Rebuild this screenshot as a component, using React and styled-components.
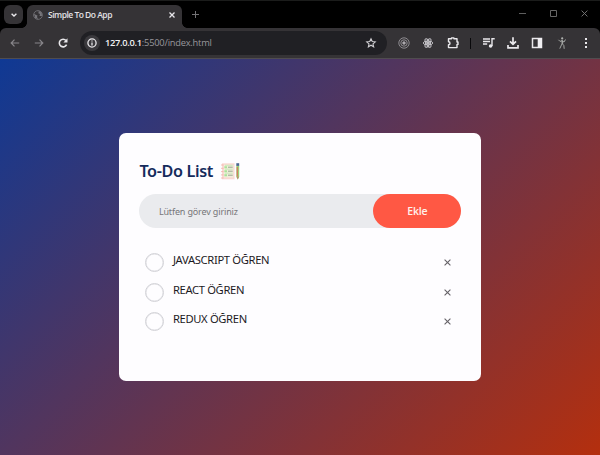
import React from "react";
import styled, { createGlobalStyle } from "styled-components";

const GlobalStyle = createGlobalStyle`
  * { box-sizing: border-box; }
  body { margin: 0; background: #000; font-family: "Open Sans", "Noto Sans", sans-serif; }
  button, input { font: inherit; border: 0; padding: 0; margin: 0; background: none; }
  svg { display: block; flex: none; overflow: visible; }
`;

const Window = styled.div`
  width: 600px;
  height: 455px;
  display: flex;
  flex-direction: column;
  overflow: hidden;
  background: #000;
`;

const TabStrip = styled.header`
  height: 28px;
  flex: none;
  display: flex;
  align-items: flex-start;
  border-top: 1px solid #1b1c1b;
  padding: 4px 8px 0 4px;
`;

const TabSearch = styled.button`
  width: 19px;
  height: 19px;
  border-radius: 6px;
  background: #353336;
  display: grid;
  place-items: center;
`;

const Tab = styled.div`
  position: relative;
  width: 155px;
  height: 23px;
  margin-left: 4px;
  padding: 0 7px 3px 6px;
  border-radius: 6px 6px 0 0;
  background: #353336;
  display: flex;
  align-items: center;
  &::before, &::after {
    content: "";
    position: absolute;
    bottom: 0;
    width: 5px;
    height: 5px;
  }
  &::before { left: -5px; background: radial-gradient(circle at 0 0, transparent 4.5px, #353336 5px); }
  &::after { right: -5px; background: radial-gradient(circle at 100% 0, transparent 4.5px, #353336 5px); }
`;

const TabTitle = styled.span`
  flex: 1;
  margin-left: 5px;
  color: #e2e1e4;
  font: 600 8.5px/12px "Open Sans", sans-serif;
  letter-spacing: -0.5px;
  white-space: nowrap;
`;

const NewTab = styled.button`
  width: 8px;
  height: 19px;
  margin-left: 9px;
  display: grid;
  place-items: center;
`;

const WindowControls = styled.div`
  margin-left: auto;
  height: 17px;
  display: flex;
  align-items: center;
  gap: 24px;
  padding-right: 4px;
`;

const Toolbar = styled.nav`
  height: 31px;
  flex: none;
  display: flex;
  align-items: center;
  background: #353336;
  border-bottom: 1px solid #504d4f;
  border-radius: 6px 6px 0 0;
  padding: 0 9px 0 9px;
`;

const NavButtons = styled.div`
  display: flex;
  align-items: center;
  gap: 12px;
  width: 71px;
  flex: none;
`;

const AddressBar = styled.div`
  width: 307px;
  flex: none;
  height: 24px;
  padding: 0 11px 0 4px;
  border-radius: 12px;
  background: #202024;
  display: flex;
  align-items: center;
`;

const SiteInfo = styled.span`
  width: 16px;
  height: 16px;
  border-radius: 50%;
  background: #3a393d;
  display: grid;
  place-items: center;
`;

const Url = styled.span`
  flex: 1;
  margin-left: 5px;
  color: #98979c;
  font: 400 9.3px/14px "Open Sans", sans-serif;
  letter-spacing: -0.22px;
  b { color: #f2f2f3; font-weight: 600; letter-spacing: -0.3px; }
`;

const Extensions = styled.div`
  margin-left: 11px;
  display: flex;
  align-items: center;
  gap: 12.3px;
`;

const Divider = styled.span`
  width: 1.5px;
  flex: none;
  height: 11px;
  margin: 0 -1px;
  background: #09090b;
`;

const Page = styled.main`
  flex: 1;
  padding-top: 74px;
  background: linear-gradient(135deg, #0f3994, #b42f0e);
`;

const Card = styled.section`
  width: 362px;
  height: 248px;
  margin: 0 auto 0 119.4px;
  padding: 26px 20px;
  border-radius: 7px;
  background: #fefdff;
`;

const Heading = styled.h2`
  height: 24px;
  margin: 0;
  display: flex;
  align-items: center;
  gap: 8px;
  color: #152b5c;
  font: 600 16.2px/24px "Noto Sans", sans-serif;
  span { width: 74px; white-space: nowrap; letter-spacing: -0.36px; }
`;

const AddForm = styled.form`
  height: 34px;
  margin-top: 11px;
  display: flex;
  border-radius: 17px;
  background: #eaebee;
`;

const TaskInput = styled.input`
  flex: 1;
  min-width: 0;
  padding-left: 19.5px;
  padding-top: 1px;
  outline: 0;
  font: 400 9px/14px "Noto Sans", sans-serif;
  letter-spacing: -0.15px;
  &::placeholder { color: #767679; opacity: 1; }
`;

const AddButton = styled.button`
  width: 88px;
  border-radius: 17px;
  background: #ff5844;
  color: #fff2ed;
  font: 600 10.5px/34px "Open Sans", sans-serif;
  letter-spacing: -0.15px;
`;

const TaskList = styled.ul`
  list-style: none;
  margin: 19.7px 0 0;
  padding: 0 10.3px 0 5.5px;
`;

const Task = styled.li`
  height: 29.6px;
  display: flex;
  align-items: center;
`;

const Check = styled.span`
  width: 19px;
  height: 19px;
  border: 1px solid #d2d2d7;
  box-shadow: inset 0 0 0 0.5px #dedee2;
  border-radius: 50%;
`;

const TaskName = styled.span`
  flex: 1;
  margin: -4.6px 0 0 9px;
  color: #1c1a1e;
  font: 400 11.2px/16px "Noto Sans", sans-serif;
  letter-spacing: -0.33px;
`;

const Icon = ({ w = 12, h = w, box = "0 0 12 12", color = "#e9e8eb", sw = 1.3, children }) => (
  <svg width={w} height={h} viewBox={box} fill="none" stroke={color} strokeWidth={sw}>
    {children}
  </svg>
);

const Cross = ({ size, color, sw }) => (
  <Icon w={size} box="0 0 6 6" color={color} sw={sw}>
    <path d="M.5 .5 5.5 5.5M5.5 .5 .5 5.5" />
  </Icon>
);

const Globe = () => (
  <Icon w={10} box="0 0 10 10" color="#69686d" sw={1}>
    <circle cx="5" cy="5" r="4.4" />
    <path d="M1 3.5 3 5 4.5 5.5 4 7 5 9 2.2 8Z M4 1 6.5 1.5 5 3 7 4 6.5 6 9 6 8.7 3 6.5 1Z" fill="#77767b" stroke="none" />
  </Icon>
);

const Notepad = () => (
  <svg width="19" height="17" viewBox="0 0 19 17">
    <path d="M1 .3H13.5V16.3H1Z" fill="#f9d8d2" />
    <path d="M3 1.8H12.4V14.4H3Z" fill="#f1eed9" />
    <path d="M0 2H2.5M0 5.3H2.5M0 8.6H2.5M0 11.9H2.5M0 15H2.5" stroke="#f3afa7" strokeWidth=".8" />
    <path d="M3.4 4.2H6M3.4 8.2H6M3.4 12.2H6" stroke="#a9e39a" strokeWidth="2" />
    <path d="M7 4.2H11.7M7 8.2H11.7M7 12.2H11.7" stroke="#8f9b8a" strokeWidth=".9" />
    <path d="M4 2.3H11.7M4 6.2H11.7M4 10.2H11.7" stroke="#c0e9b3" strokeWidth=".8" />
    <path d="M15.3 2.7H18.2V13.8L16.8 16.5 15.3 13.8Z" fill="#9bd077" />
    <path d="M16.3 4V13.4" stroke="#dd705c" strokeWidth="1.1" />
    <path d="M15.3 .2H18.2V2.9H15.3Z" fill="#4b6690" />
    <path d="M15.6 13.8H18L16.8 16.5Z" fill="#b98c6e" />
  </svg>
);

const tasks = ["JAVASCRIPT ÖĞREN", "REACT ÖĞREN", "REDUX ÖĞREN"];

const BrowserTabs = () => (
  <TabStrip>
    <TabSearch aria-label="Search tabs">
      <Icon w={6} h={4} box="0 0 6 4" sw={1.4}><path d="M.6 .7 3 3 5.4 .7" /></Icon>
    </TabSearch>
    <Tab>
      <Globe />
      <TabTitle>Simple To Do App</TabTitle>
      <Cross size={6} color="#e8e7eb" sw={1.3} />
    </Tab>
    <NewTab aria-label="New tab">
      <Icon w={7} box="0 0 7 7" color="#737275" sw={1}><path d="M3.5 0V7M0 3.5H7" /></Icon>
    </NewTab>
    <WindowControls>
      <Icon w={7} box="0 0 7 7" color="#5e5e5e" sw={1}><path d="M0 3.5H7" /></Icon>
      <Icon w={7} box="0 0 7 7" color="#666" sw={1}><path d="M.5 .5H6.5V6.5H.5Z" /></Icon>
      <Cross size={7} color="#777" sw={0.8} />
    </WindowControls>
  </TabStrip>
);

const BrowserToolbar = () => (
  <Toolbar>
    <NavButtons>
      <Icon color="#88868a" sw={1.2}><path d="M10.2 6H2.2M5.5 2.7 2.2 6 5.5 9.3" /></Icon>
      <Icon color="#88868a" sw={1.2}><path d="M1.8 6H9.8M6.5 2.7 9.8 6 6.5 9.3" /></Icon>
      <Icon sw={1.6}>
        <path d="M9.6 7.6A3.8 3.8 0 1 1 9 3.5" />
        <path d="M10.5 1.3V5.4H6.4Z" fill="#e9e8eb" stroke="none" />
      </Icon>
    </NavButtons>
    <AddressBar>
      <SiteInfo>
        <Icon w={10} box="0 0 10 10" sw={1.3}><circle cx="5" cy="5" r="4.1" /><path d="M5 4.5V7.4M5 2.5V3.6" /></Icon>
      </SiteInfo>
      <Url><b>127.0.0.1</b>:5500/index.html</Url>
      <Icon w={10} color="#cfced2" sw={1.3}><path d="M6 .9 7.5 4.2 11.1 4.6 8.4 7 9.2 10.6 6 8.7 2.8 10.6 3.6 7 .9 4.6 4.5 4.2Z" /></Icon>
    </AddressBar>
    <Extensions>
      <Icon color="#a2a0a4" sw={0.8}><circle cx="6" cy="6" r="5.2" /><circle cx="6" cy="6" r="3.2" /><circle cx="6" cy="6" r="1.3" fill="#b6b4b9" /></Icon>
      <Icon color="#c5c3c8" sw={1}>
        <ellipse cx="6" cy="6" rx="4.8" ry="1.9" />
        <ellipse cx="6" cy="6" rx="4.8" ry="1.9" transform="rotate(60 6 6)" />
        <ellipse cx="6" cy="6" rx="4.8" ry="1.9" transform="rotate(120 6 6)" />
        <circle cx="6" cy="6" r="1" fill="#ddd" />
      </Icon>
      <Icon sw={1.4}><path d="M1.5 1.8H4.5V.9H6.9V1.8H10V5H11V7.4H10V10.6H1.5V7.8A1.5 1.5 0 0 0 1.5 4.8Z" strokeLinejoin="round" /></Icon>
      <Divider />
      <Icon sw={1.4}><path d="M0 2H7M0 4.5H7M0 7H4.2M9 9V1.8H11.7" /><circle cx="7.6" cy="9" r="1.8" fill="#e9e8eb" stroke="none" /></Icon>
      <Icon sw={1.7}><path d="M6 .3V7M3 4.4 6 7.4 9 4.4M1 8V10.8H11V8" /></Icon>
      <Icon sw={1.5}><path d="M1.5 1.5H10.5V10.5H1.5Z" /><path d="M6.7 1H11V11H6.7Z" fill="#f0eff2" stroke="none" /></Icon>
      <Icon color="#aeb1ae" sw={0.9}>
        <circle cx="6.2" cy="1.4" r="1.1" fill="#b0b3b0" stroke="none" />
        <path d="M6 3V6.8L3.8 11.6M6.3 6.8 7.8 8.4 8.2 11.8M2.5 2.8 4 4.4 6 3.8 8 5 9.5 2.5M6.6 3.5V7" />
      </Icon>
      <Icon><path d="M5 1H7V3H5ZM5 5H7V7H5ZM5 9H7V11H5Z" fill="#e9e8eb" stroke="none" /></Icon>
    </Extensions>
  </Toolbar>
);

export default function App() {
  return (
    <>
      <GlobalStyle />
      <Window>
        <BrowserTabs />
        <BrowserToolbar />
        <Page>
          <Card>
            <Heading><span>To-Do List</span><Notepad /></Heading>
            <AddForm onSubmit={(e) => e.preventDefault()}>
              <TaskInput placeholder="Lütfen görev giriniz" />
              <AddButton>Ekle</AddButton>
            </AddForm>
            <TaskList>
              {tasks.map((name) => (
                <Task key={name}>
                  <Check />
                  <TaskName>{name}</TaskName>
                  <Cross size={7} color="#656267" sw={0.95} />
                </Task>
              ))}
            </TaskList>
          </Card>
        </Page>
      </Window>
    </>
  );
}
